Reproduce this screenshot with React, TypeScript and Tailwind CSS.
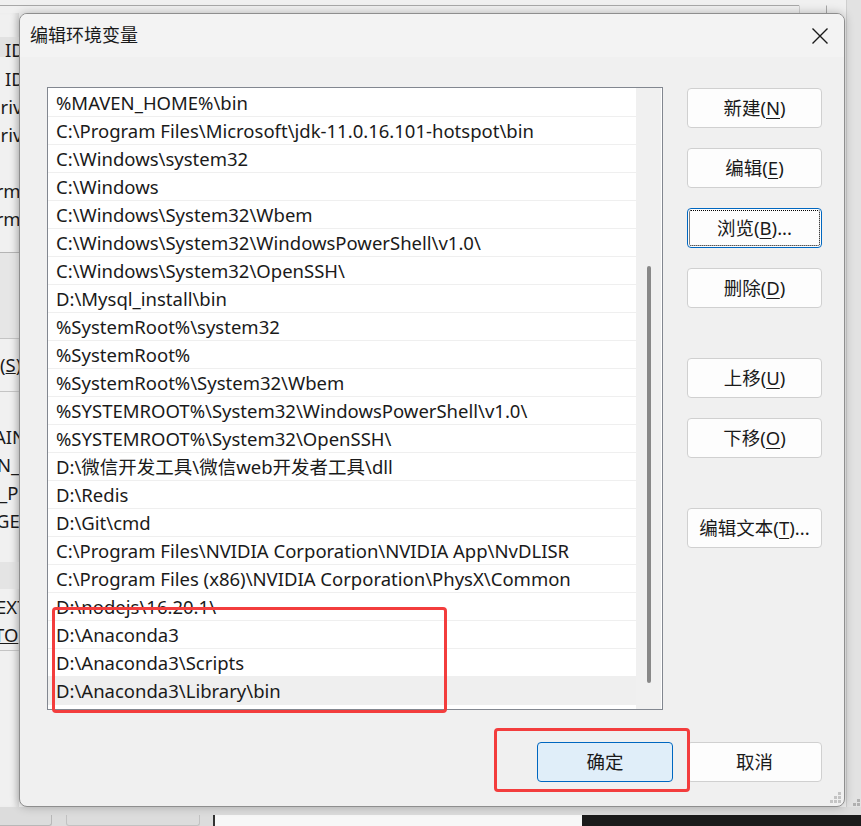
import React from "react";

const paths = [
  "%MAVEN_HOME%\\bin",
  "C:\\Program Files\\Microsoft\\jdk-11.0.16.101-hotspot\\bin",
  "C:\\Windows\\system32",
  "C:\\Windows",
  "C:\\Windows\\System32\\Wbem",
  "C:\\Windows\\System32\\WindowsPowerShell\\v1.0\\",
  "C:\\Windows\\System32\\OpenSSH\\",
  "D:\\Mysql_install\\bin",
  "%SystemRoot%\\system32",
  "%SystemRoot%",
  "%SystemRoot%\\System32\\Wbem",
  "%SYSTEMROOT%\\System32\\WindowsPowerShell\\v1.0\\",
  "%SYSTEMROOT%\\System32\\OpenSSH\\",
  "D:\\微信开发工具\\微信web开发者工具\\dll",
  "D:\\Redis",
  "D:\\Git\\cmd",
  "C:\\Program Files\\NVIDIA Corporation\\NVIDIA App\\NvDLISR",
  "C:\\Program Files (x86)\\NVIDIA Corporation\\PhysX\\Common",
  "D:\\nodejs\\16.20.1\\",
  "D:\\Anaconda3",
  "D:\\Anaconda3\\Scripts",
  "D:\\Anaconda3\\Library\\bin",
];

type BtnProps = {
  text: string;
  keyChar?: string;
  tail?: string;
  focus?: boolean;
  primary?: boolean;
  className?: string;
};

const Btn = ({ text, keyChar, tail = "", focus, primary, className = "" }: BtnProps) => (
  <button
    className={`h-[40px] w-[135px] shrink-0 rounded-[4px] border text-[18.5px] text-[#1a1a1a] flex items-center justify-center ${
      primary
        ? "bg-[#e0eef9] border-[#0067c0]"
        : focus
        ? "bg-[#fdfdfd] border-[#0067c0] outline-1 outline-dotted outline-black outline-offset-[-3px]"
        : "bg-[#fdfdfd] border-[#d0d0d0]"
    } ${className}`}
  >
    {text}
    {keyChar && (
      <>
        (<span className="underline underline-offset-[3px]">{keyChar}</span>)
      </>
    )}
    {tail}
  </button>
);

// little dotted size grip
const Grip = ({ className = "", fill = "#c4c4c4" }: { className?: string; fill?: string }) => (
  <svg className={className} width="12" height="12" viewBox="0 0 12 12">
    <rect x="8" y="0" width="3" height="3" fill={fill} />
    <rect x="4" y="4" width="3" height="3" fill={fill} />
    <rect x="8" y="4" width="3" height="3" fill={fill} />
    <rect x="0" y="8" width="3" height="3" fill={fill} />
    <rect x="4" y="8" width="3" height="3" fill={fill} />
    <rect x="8" y="8" width="3" height="3" fill={fill} />
  </svg>
);

export default function App() {
  return (
    <div className="relative w-[861px] h-[826px] overflow-hidden bg-[#f0f0f0] flex flex-col font-['Noto_Sans','Noto_Sans_CJK_SC',sans-serif] text-[#1a1a1a]">
      {/* top strip of the window behind */}
      <div className="h-[13px] shrink-0 flex">
        <div className="w-[799px] h-[6px] border-b border-[#a8a8a8]" />
        <div className="w-[28px] h-[13px] mt-[5px] border border-r-[#a8a8a8] border-l-[#cfcfcf] border-y-transparent" />
        <div className="flex-1 bg-[#e2e2e2] ml-[19px] border-l border-[#cfcfcf]" />
      </div>

      <div className="flex flex-1 min-h-0">
        {/* left strip: clipped content of the window behind */}
        <div className="w-[19px] shrink-0 overflow-hidden flex flex-col whitespace-nowrap text-[18.5px] leading-[28px] bg-[#f0f0f0] shadow-[inset_-6px_0_6px_-4px_rgba(0,0,0,0.12)]">
          <div className="h-[24px] shrink-0" />
          <div className="h-[20px] shrink-0 bg-[#e2e2e2] pl-[5px] leading-[26px]">ID</div>
          <div className="h-[7px] shrink-0" />
          <div className="h-[28px] shrink-0 pl-[5px] leading-[30px]">ID</div>
          <div className="h-[28px] shrink-0 ml-[-13px] leading-[30px]">Drive</div>
          <div className="h-[28px] shrink-0 ml-[-13px] leading-[30px]">Drive</div>
          <div className="h-[28px] shrink-0" />
          <div className="h-[28px] shrink-0 ml-[-26px] leading-[30px]">Perm</div>
          <div className="h-[28px] shrink-0 ml-[-26px] leading-[30px]">Perm</div>
          <div className="h-[21px] shrink-0 border-b border-[#b4b4b4]" />
          <div className="h-[86px] shrink-0 bg-[#e6e6e6] border-b border-[#c4c4c4]" />
          <div className="h-[53px] shrink-0 flex items-center border-b border-[#c4c4c4]">
            (<span className="underline">S</span>)
          </div>
          <div className="h-[31px] shrink-0" />
          <div className="h-[28px] shrink-0 ml-[-6px]">AIN</div>
          <div className="h-[28px] shrink-0 ml-[-3px]">N_</div>
          <div className="h-[28px] shrink-0 ml-[-1px]">_P</div>
          <div className="h-[28px] shrink-0 ml-[-4px]">GER</div>
          <div className="h-[27px] shrink-0" />
          <div className="h-[27px] shrink-0 bg-[#e4e4e4]" />
          <div className="h-[32px] shrink-0 ml-[-4px] leading-[36px]">EXT</div>
          <div className="h-[30px] shrink-0 ml-[-6px] underline border-b border-[#c4c4c4]">TO</div>
        </div>

        {/* dialog */}
        <div className="relative w-[826px] h-[794px] shrink-0 rounded-[8px] border border-[#8e8e8e] bg-[#f0f0f0] overflow-hidden flex flex-col shadow-[0_0_10px_rgba(0,0,0,0.25)]">
          <div className="h-[43px] shrink-0 bg-[#f3f3f3] flex items-center justify-between pl-[10px] pr-[16px]">
            <span className="text-[18px] text-[#1a1a1a]">编辑环境变量</span>
            <svg width="16" height="16" viewBox="0 0 16 16">
              <path d="M0.5 0.5 L15.5 15.5 M15.5 0.5 L0.5 15.5" stroke="#1a1a1a" strokeWidth="1.4" />
            </svg>
          </div>

          <div className="flex-1 flex flex-col pl-[27px] pr-[22px] pt-[30px]">
            <div className="flex">
              <div className="w-[616px] h-[623px] border border-[#828790] bg-white flex">
                <div className="w-[588px] pt-px flex flex-col">
                  {paths.map((p, i) => (
                    <div
                      key={i}
                      className={`h-[28px] shrink-0 pl-[8px] flex items-center whitespace-nowrap text-[18.5px] ${
                        i === paths.length - 1 ? "bg-[#efefef]" : "border-b border-[#efefef]"
                      }`}
                    >
                      {p}
                    </div>
                  ))}
                </div>
                <div className="flex-1 bg-[#f0f0f0] border-r border-white flex justify-center pt-[178px]">
                  <div className="w-[4px] h-[417px] rounded-full bg-[#888888]" />
                </div>
              </div>

              <div className="ml-[24px] pt-px flex flex-col">
                <Btn text="新建" keyChar="N" />
                <Btn text="编辑" keyChar="E" className="mt-[20px]" />
                <Btn text="浏览" keyChar="B" tail="..." focus className="mt-[20px]" />
                <Btn text="删除" keyChar="D" className="mt-[20px]" />
                <Btn text="上移" keyChar="U" className="mt-[50px]" />
                <Btn text="下移" keyChar="O" className="mt-[20px]" />
                <Btn text="编辑文本" keyChar="T" tail="..." className="mt-[50px]" />
              </div>
            </div>

            <div className="mt-[32px] flex justify-end gap-[14px]">
              <Btn text="确定" primary className="w-[136px]" />
              <Btn text="取消" />
            </div>
          </div>

          <Grip className="absolute right-[2px] bottom-[2px]" />
        </div>

        {/* right strip */}
        <div className="flex-1 flex">
          <div className="w-[1px] ml-[1px] bg-[#cfcfcf]" />
          <div className="flex-1 bg-[#e2e2e2] flex items-end justify-end">
            <Grip fill="#b0b0b0" className="mb-[-4px]" />
          </div>
        </div>
      </div>

      {/* bottom strip of the window behind */}
      <div className="h-[19px] shrink-0 bg-[#dcdcdc] flex items-end">
        <div className="w-[52px] h-[11px] border-r border-b border-[#b8b8b8] rounded-br-[3px]" />
        <div className="w-[134px] h-[11px] ml-[14px] border border-t-0 border-[#c2c2c2] rounded-b-[3px]" />
        <div className="w-[369px] h-[11px] ml-[13px] bg-[#f7f7f7] border-l-2 border-[#333]" />
        <div className="flex-1 h-[11px] bg-[#1b1b1b]" />
      </div>

      {/* red annotation boxes */}
      <div className="absolute left-[52px] top-[607px] w-[395px] h-[106px] border-[3px] border-[#f33d3d] rounded-[4px]" />
      <div className="absolute left-[494px] top-[728px] w-[196px] h-[64px] border-[3px] border-[#f33d3d] rounded-[4px]" />
    </div>
  );
}
